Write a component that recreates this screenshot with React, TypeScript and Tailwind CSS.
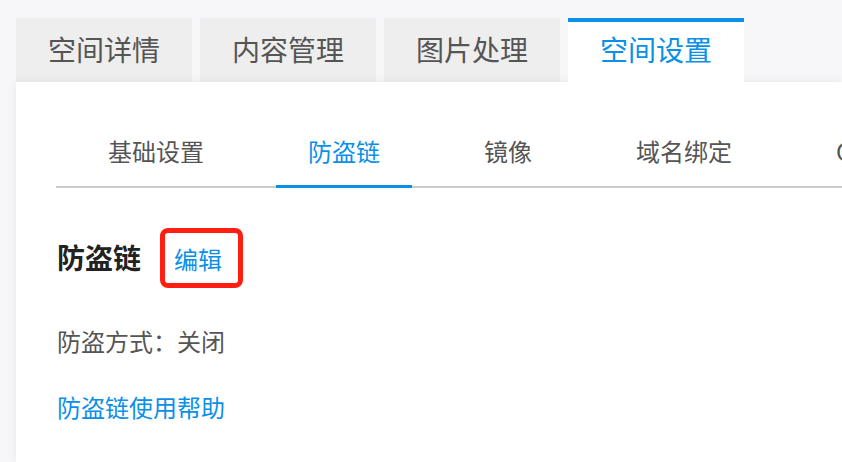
import React from "react";

const font = { fontFamily: '"Noto Sans CJK SC", "Noto Sans", sans-serif' };

export default function App() {
  const topTabs = ["空间详情", "内容管理", "图片处理", "空间设置"];
  const subTabs = ["基础设置", "防盗链", "镜像", "域名绑定", "CDN设置"];
  return (
    <div
      className="w-[842px] h-[462px] overflow-hidden bg-[#f7f7f9] pt-[18px] pl-[16px] flex flex-col"
      style={font}
    >
      <div className="flex gap-2 h-[64px] shrink-0">
        {topTabs.map((t, i) =>
          i === 3 ? (
            <div
              key={t}
              className="relative z-10 w-[176px] h-[66px] bg-white border-t-4 border-[#0a90e8] flex items-center justify-center text-[28px] leading-[28px] text-[#0a90e8] pb-[9px]"
            >
              {t}
            </div>
          ) : (
            <div
              key={t}
              className="w-[176px] h-[64px] bg-[#eeeeee] flex items-center justify-center text-[28px] leading-[28px] text-[#555555] pb-[3px]"
            >
              {t}
            </div>
          )
        )}
      </div>
      <div className="flex-1 bg-white shadow-[0_0_10px_rgba(0,0,0,0.07)] pl-[40px] overflow-hidden">
        <div className="flex border-b-2 border-[#cccccc] pt-[57px] whitespace-nowrap">
          {subTabs.map((t, i) => (
            <div
              key={t}
              className={
                i === 1
                  ? "shrink-0 mx-[20px] px-[32px] pb-[21px] text-[24px] leading-[24px] text-[#0a90e8] border-b-[3px] border-[#0a90e8] -mb-[2px]"
                  : "shrink-0 mx-[20px] px-[32px] pb-[23px] text-[24px] leading-[24px] text-[#555555]"
              }
            >
              {t}
            </div>
          ))}
        </div>
        <div className="flex items-center mt-[40px] pl-[1px]">
          <div className="text-[28px] leading-[28px] font-bold text-[#222222] -mt-[2px]">防盗链</div>
          <div className="ml-[19px] w-[83px] h-[60px] border-[5px] border-[#ff1e12] rounded-[8px] flex items-center pl-[9px] pt-[2px]">
            <span className="text-[24px] leading-[24px] text-[#0a90e8]">编辑</span>
          </div>
        </div>
        <div className="mt-[41px] text-[24px] leading-[24px] text-[#555555] pl-[1px]">防盗方式：关闭</div>
        <div className="mt-[42px] text-[24px] leading-[24px] text-[#0a90e8] pl-[1px]">防盗链使用帮助</div>
      </div>
    </div>
  );
}
